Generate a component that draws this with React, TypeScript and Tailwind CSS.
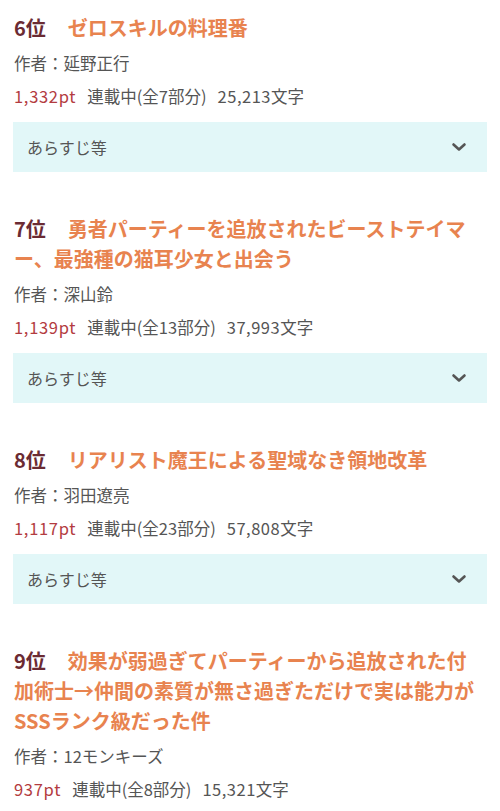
import React from "react";

type Item = {
  rank: string;
  title: string;
  author: string;
  pt: string;
  status: string;
  num: string;
  box: boolean;
};

const items: Item[] = [
  { rank: "6位", title: "ゼロスキルの料理番", author: "延野正行", pt: "1,332pt", status: "連載中(全7部分)", num: "25,213", box: true },
  { rank: "7位", title: "勇者パーティーを追放されたビーストテイマー、最強種の猫耳少女と出会う", author: "深山鈴", pt: "1,139pt", status: "連載中(全13部分)", num: "37,993", box: true },
  { rank: "8位", title: "リアリスト魔王による聖域なき領地改革", author: "羽田遼亮", pt: "1,117pt", status: "連載中(全23部分)", num: "57,808", box: true },
  { rank: "9位", title: "効果が弱過ぎてパーティーから追放された付加術士→仲間の素質が無さ過ぎただけで実は能力がSSSランク級だった件", author: "12モンキーズ", pt: "937pt", status: "連載中(全8部分)", num: "15,321", box: false },
];

function Chevron() {
  return (
    <svg width="16" height="12" viewBox="0 0 16 12" fill="none">
      <path d="M2.5 3.5 L8 8.5 L13.5 3.5" stroke="#555555" strokeWidth="2.6" strokeLinecap="round" strokeLinejoin="round" />
    </svg>
  );
}

export default function App() {
  return (
    <div
      className="w-[500px] h-[811px] overflow-hidden bg-white px-[14px] pt-[13px]"
      style={{ fontFamily: '"Noto Sans CJK JP", "Noto Sans", sans-serif' }}
    >
      {items.map((it) => (
        <div key={it.rank} className="flex flex-col mb-[42px]">
          <div className="text-[20px] leading-[30px] font-bold text-[#e8834f] break-all">
            <span className="text-[#6b2b33] mr-[22px]">{it.rank}</span>
            {it.title}
          </div>
          <div className="mt-2 text-[16.5px] leading-[24px] text-[#555555]">作者：{it.author}</div>
          <div className="mt-[9px] text-[16.5px] leading-[24px] text-[#555555] flex">
            <span className="text-[#b33b40] mr-[11px] tracking-[0.7px]">{it.pt}</span>
            <span className="mr-[11px]">{it.status}</span>
            <span>
              <span className="tracking-[0.5px]">{it.num}</span>文字
            </span>
          </div>
          {it.box && (
            <div className="mt-[14px] h-[50px] -mx-px bg-[#e2f7f8] flex items-center justify-between pl-[14px] pr-[20px]">
              <span className="text-[16px] text-[#555555]">あらすじ等</span>
              <Chevron />
            </div>
          )}
        </div>
      ))}
    </div>
  );
}
